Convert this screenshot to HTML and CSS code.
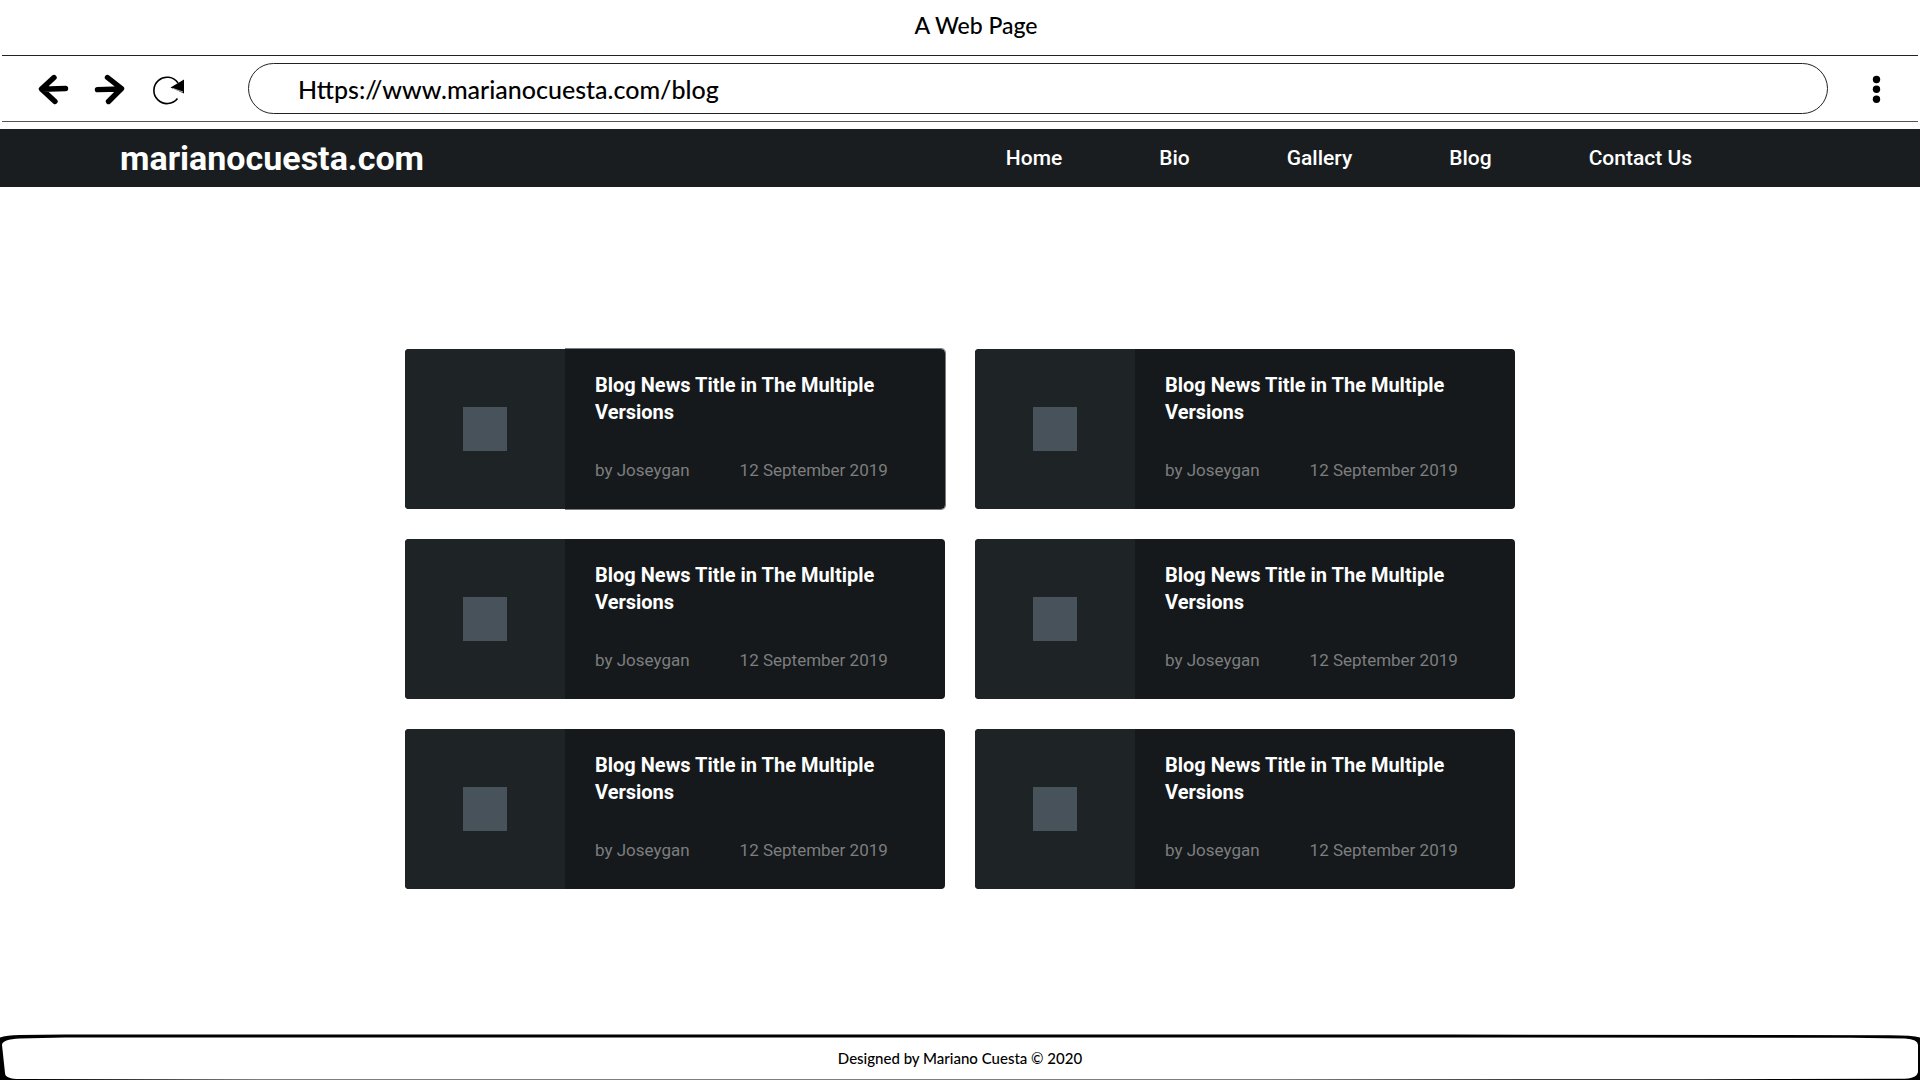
FILE: index.html
```html
<!DOCTYPE html>
<html lang="en">
<head>
<meta charset="utf-8">
<meta name="viewport" content="width=device-width, initial-scale=1">
<title>A Web Page</title>
<link rel="stylesheet" href="styles.css">
</head>
<body>
<div class="window-title">A Web Page</div>
<div class="toolbar">
  <div class="toolbar-actions">
    <button class="icon-button" type="button" aria-label="Back"><svg viewBox="0 2 32 32"><path d="M16 6.500 3.500 18 17 30.500M4 18.300 27.500 17.500" fill="none" stroke="#000" stroke-width="5.400" stroke-linecap="round" stroke-linejoin="round"/></svg></button>
    <button class="icon-button" type="button" aria-label="Forward"><svg viewBox="0 2 32 32"><path d="M12.500 6.500 26.500 17.500 13.500 30.500M26 18 2.500 18.600" fill="none" stroke="#000" stroke-width="5.400" stroke-linecap="round" stroke-linejoin="round"/></svg></button>
    <button class="icon-button" type="button" aria-label="Reload"><svg viewBox="0 2 32 32"><path d="M26 12A13.200 13.200 0 1 0 25.500 27.500" fill="none" stroke="#000" stroke-width="1.600"/><path d="M18.500 16.500 32 8.500V22.500Z"/><path d="M21 17.500 31 21" stroke="#fff" stroke-width=".7"/></svg></button>
  </div>
  <input class="address" type="text" aria-label="Address" value="Https://www.marianocuesta.com/blog">
  <button class="icon-button" type="button" aria-label="Menu"><svg viewBox="0 2 32 32"><circle cx="16.500" cy="8.500" r="3.700"/><circle cx="16.500" cy="18.300" r="3.700"/><circle cx="16.500" cy="28.300" r="3.700"/></svg></button>
</div>
<header class="site-header">
  <a class="logo" href="#">marianocuesta.com</a>
  <nav class="nav">
    <a href="#">Home</a>
    <a href="#">Bio</a>
    <a href="#">Gallery</a>
    <a href="#">Blog</a>
    <a href="#">Contact Us</a>
  </nav>
</header>
<main class="main">
  <div class="posts">
    <article class="card card-active"><div class="card-media"><span class="thumb"></span></div><div class="card-body"><h2 class="card-title">Blog News Title in The Multiple Versions</h2><div class="meta"><span>by Joseygan</span><span>12 September 2019</span></div></div></article>
    <article class="card"><div class="card-media"><span class="thumb"></span></div><div class="card-body"><h2 class="card-title">Blog News Title in The Multiple Versions</h2><div class="meta"><span>by Joseygan</span><span>12 September 2019</span></div></div></article>
    <article class="card"><div class="card-media"><span class="thumb"></span></div><div class="card-body"><h2 class="card-title">Blog News Title in The Multiple Versions</h2><div class="meta"><span>by Joseygan</span><span>12 September 2019</span></div></div></article>
    <article class="card"><div class="card-media"><span class="thumb"></span></div><div class="card-body"><h2 class="card-title">Blog News Title in The Multiple Versions</h2><div class="meta"><span>by Joseygan</span><span>12 September 2019</span></div></div></article>
    <article class="card"><div class="card-media"><span class="thumb"></span></div><div class="card-body"><h2 class="card-title">Blog News Title in The Multiple Versions</h2><div class="meta"><span>by Joseygan</span><span>12 September 2019</span></div></div></article>
    <article class="card"><div class="card-media"><span class="thumb"></span></div><div class="card-body"><h2 class="card-title">Blog News Title in The Multiple Versions</h2><div class="meta"><span>by Joseygan</span><span>12 September 2019</span></div></div></article>
  </div>
</main>
<footer class="footer">
  <svg class="footer-frame" viewBox="0 0 1920 46" preserveAspectRatio="none" aria-hidden="true">
    <path fill-rule="evenodd" d="M0 3.500Q6 1.300 20 1.100L65 .6H1450L1890 1.200Q1912 1.300 1920 3.500V46H0ZM20 4.600Q2 5.500 2 11L5 39Q5 45 20 45.100L300 45.500H1230L1700 45.200L1905 44.800Q1918 44 1918 37V11Q1918 5 1905 4.400L1850 3.800L1500 3.500H65Z"/>
  </svg>
  <p class="footer-text">Designed by Mariano Cuesta © 2020</p>
</footer>
</body>
</html>
```
FILE: styles.css
```css
* {
  box-sizing: border-box;
}

body {
  display: flex;
  flex-direction: column;
  min-height: 100vh;
  margin: 0;
  background: #fff;
  color: #000;
  font-family: Roboto, sans-serif;
}

a {
  color: inherit;
  text-decoration: none;
}

.window-title,
.address,
.footer-text {
  font-family: "Tekton Pro", Lato, sans-serif;
  font-weight: 500;
}

.window-title {
  padding: 9px 0 14px 32px;
  font-size: 23px;
  line-height: 32px;
  text-align: center;
}

.toolbar {
  display: flex;
  align-items: center;
  margin: 0 2px;
  padding: 7px 26px 7px 36px;
  border-top: 1px solid #222;
  border-bottom: 1px solid #555;
}

.toolbar-actions {
  display: flex;
  gap: 25px;
}

.icon-button {
  width: 32px;
  height: 32px;
  padding: 0;
  border: 0;
  background: none;
  cursor: pointer;
}

.icon-button svg {
  display: block;
  width: 32px;
  height: 32px;
  overflow: visible;
}

.address {
  flex: 1;
  min-width: 0;
  height: 51px;
  margin: 0 32px 0 64px;
  padding: 0 49px;
  border: 1px solid #222;
  border-radius: 26px;
  background: #fff;
  color: #000;
  font-size: 25px;
}

.site-header {
  display: flex;
  align-items: center;
  justify-content: space-between;
  margin-top: 7px;
  padding: 9px 228px 9px 120px;
  background: #191d1f;
  color: #fff;
}

.logo {
  font-size: 34px;
  font-weight: 700;
  line-height: 40px;
}

.nav {
  display: flex;
  gap: 97px;
  font-size: 21px;
  font-weight: 500;
  line-height: 32px;
}

.main {
  display: flex;
  flex: 1;
  align-items: center;
  justify-content: center;
  padding: 48px 32px 32px;
}

.posts {
  display: grid;
  grid-template-columns: repeat(auto-fit, minmax(480px, 1fr));
  gap: 30px;
  width: 100%;
  max-width: 1110px;
}

.card {
  display: flex;
  border-radius: 4px;
  background: #15191b;
}

.card-media {
  display: flex;
  flex: 0 0 160px;
  align-items: center;
  justify-content: center;
  border-radius: 4px 0 0 4px;
  background: #1e2325;
}

.thumb {
  width: 44px;
  height: 44px;
  background: #47525b;
}

.card-body {
  flex: 1;
  padding: 23px 30px 27px;
  border-radius: 0 4px 4px 0;
}

.card-active .card-body {
  box-shadow: 1px 0 #797d7f, 0 1px #797d7f, 0 -1px #797d7f;
}

.card-title {
  margin: 0;
  color: #fff;
  font-size: 20px;
  font-weight: 700;
  line-height: 27px;
}

.meta {
  display: flex;
  gap: 50px;
  margin-top: 32px;
  color: #7c7e7f;
  font-size: 17px;
  line-height: 24px;
}

.footer {
  position: relative;
  padding: 12px 16px 10px;
}

.footer-frame {
  position: absolute;
  inset: 0;
  width: 100%;
  height: 100%;
}

.footer-text {
  position: relative;
  margin: 0;
  font-size: 15px;
  line-height: 24px;
  text-align: center;
}
```
